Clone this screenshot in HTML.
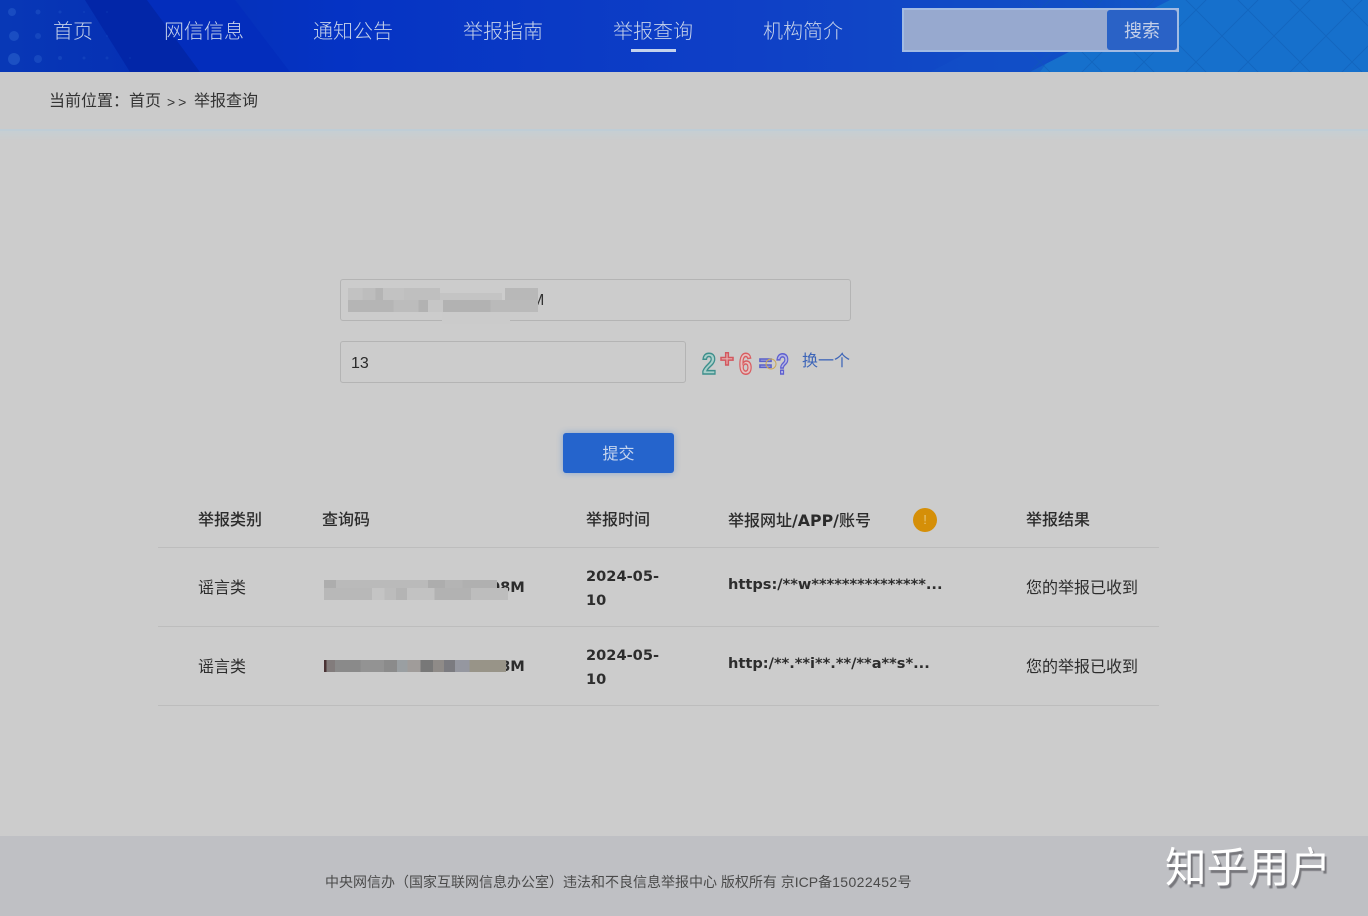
<!DOCTYPE html>
<html lang="zh">
<head>
<meta charset="utf-8">
<title>举报查询</title>
<style>
html,body{margin:0;padding:0;}
body{width:1368px;height:916px;position:relative;overflow:hidden;background:#cccccc;font-family:"Liberation Sans","Noto Sans CJK SC",sans-serif;color:#2a2a2a;}
.a{position:absolute;white-space:nowrap;}
.hd{position:absolute;left:0;top:0;width:1368px;height:72px;overflow:hidden;background:#0a3bc4;}
.hd svg{position:absolute;left:0;top:0;}
.nav{position:absolute;top:17px;font-size:20px;line-height:30px;color:#c6d2ea;width:80px;text-align:center;font-weight:300;}
.th{font-size:16px;line-height:24px;color:#2b2b2b;font-weight:500;}
.td{font-size:16px;line-height:24px;color:#2d2d2d;}
.b{font-family:"DejaVu Sans","Noto Sans CJK SC",sans-serif;font-weight:bold;font-size:14.6px;}
.ln{position:absolute;left:158px;width:1001px;height:1px;background:#bdbdbd;}
</style>
</head>
<body>
<div class="hd">
<svg width="1368" height="72" viewBox="0 0 1368 72">
<defs>
<linearGradient id="g" x1="0" x2="1" y1="0" y2="0">
<stop offset="0" stop-color="#0838b6"/><stop offset=".1" stop-color="#0530b4"/><stop offset=".25" stop-color="#0533c4"/><stop offset=".55" stop-color="#0f40c6"/><stop offset=".8" stop-color="#1150c6"/><stop offset="1" stop-color="#1773cc"/>
</linearGradient>
<pattern id="d" width="52" height="52" patternUnits="userSpaceOnUse" patternTransform="translate(1170 -16)">
<path d="M0 0L52 52M52 0L0 52" stroke="#0f5ab0" stroke-width="1" fill="none"/>
</pattern>
</defs>
<rect width="1368" height="72" fill="url(#g)"/>
<polygon points="85,0 147,0 200,72 130,72" fill="#0226a8"/>
<polygon points="147,0 235,0 290,72 200,72" fill="#032dbc"/>
<polygon points="1030,72 1170,0 1368,0 1368,72" fill="#1670cc"/>
<polygon points="930,72 1010,30 1070,30 1040,72" fill="#1150c8" opacity=".5"/>
<rect x="1030" width="338" height="72" fill="url(#d)" opacity=".45"/>
<g fill="#2a60cc">
<circle cx="12" cy="12" r="4" opacity=".5"/><circle cx="38" cy="12" r="2.5" opacity=".4"/><circle cx="60" cy="12" r="1.5" opacity=".3"/><circle cx="84" cy="12" r="1" opacity=".25"/><circle cx="107" cy="12" r="1" opacity=".2"/>
<circle cx="14" cy="36" r="5" opacity=".55"/><circle cx="38" cy="36" r="3" opacity=".4"/><circle cx="60" cy="36" r="1.5" opacity=".3"/><circle cx="107" cy="36" r="1" opacity=".2"/>
<circle cx="14" cy="59" r="6" opacity=".6"/><circle cx="38" cy="59" r="4" opacity=".45"/><circle cx="60" cy="58" r="2" opacity=".35"/><circle cx="84" cy="58" r="1.5" opacity=".3"/><circle cx="107" cy="58" r="1.5" opacity=".25"/><circle cx="130" cy="58" r="1" opacity=".2"/>
</g>
</svg>
<div class="nav" style="left:33px">首页</div>
<div class="nav" style="left:164px">网信信息</div>
<div class="nav" style="left:313px">通知公告</div>
<div class="nav" style="left:463px">举报指南</div>
<div class="nav" style="left:613px">举报查询</div>
<div class="nav" style="left:763px">机构简介</div>
<div class="a" style="left:631px;top:49px;width:45px;height:3px;background:#c4d2ec;"></div>
<div class="a" style="left:902px;top:8px;width:273px;height:40px;border:2px solid #a2bbe3;background:#97a9cf;"></div>
<div class="a" style="left:1107px;top:10px;width:70px;height:40px;background:#2a62c6;border-radius:3px;color:#c3cfe8;font-size:18px;line-height:42px;text-align:center;">搜索</div>
</div>

<div class="a" style="left:0;top:72px;width:1368px;height:57px;background:#cbcbcb;"></div>
<div class="a" style="left:0;top:129px;width:1368px;height:2px;background:#bfcdd6;"></div>
<div class="a" style="left:0;top:131px;width:1368px;height:10px;background:linear-gradient(#c6cfd3,#cccccc);"></div>
<div class="a" style="left:49px;top:90px;font-size:16px;line-height:24px;color:#333;">当前位置：首页</div>
<div class="a" style="left:167px;top:90px;font-size:14px;line-height:24px;color:#333;letter-spacing:3px;">&gt;&gt;</div>
<div class="a" style="left:194px;top:90px;font-size:16px;line-height:24px;color:#333;">举报查询</div>

<!-- query code input -->
<div class="a" style="left:340px;top:279px;width:509px;height:40px;border:1px solid #b4b4b4;border-radius:3px;"></div>
<div class="a" style="left:531px;top:290px;font-size:16px;line-height:22px;color:#333;">M</div>
<div class="a" style="left:348px;top:288px;width:92px;height:12px;background:linear-gradient(90deg,#c2c2c2 0 16%,#bdbdbd 16% 30%,#b4b4b4 30% 38%,#c2c2c2 38% 61%,#bfbfbf 61% 100%);"></div>
<div class="a" style="left:348px;top:300px;width:190px;height:12px;background:linear-gradient(90deg,#b5b5b5 0 24%,#bcbcbc 24% 37%,#b2b2b2 37% 42%,#c6c6c6 42% 50%,#b2b2b2 50% 75%,#bababa 75% 100%);"></div>
<div class="a" style="left:440px;top:293px;width:62px;height:7px;background:#c4c4c4;"></div>
<div class="a" style="left:442px;top:312px;width:68px;height:12px;background:#cbcbcb;"></div>
<div class="a" style="left:505px;top:288px;width:33px;height:12px;background:#b8b8b8;"></div>

<!-- captcha -->
<div class="a" style="left:340px;top:341px;width:344px;height:40px;border:1px solid #b4b4b4;border-radius:3px;"></div>
<div class="a" style="left:351px;top:352px;font-size:16px;line-height:24px;color:#2a2a2a;">13</div>
<svg class="a" style="left:695px;top:345px;" width="100" height="35" viewBox="0 0 100 35">
<g font-family="Liberation Sans,sans-serif" font-weight="bold" stroke-width="1.5">
<text x="7" y="29" font-size="30" stroke="#3d8f8c" fill="#a9cfc9" textLength="14" lengthAdjust="spacingAndGlyphs">2</text>
<text x="25" y="22" font-size="24" stroke="#d2585f" fill="#e6b4b4" textLength="14" lengthAdjust="spacingAndGlyphs">+</text>
<text x="44" y="29" font-size="30" stroke="#d95c60" fill="#e6c0c0" textLength="13" lengthAdjust="spacingAndGlyphs">6</text>
<text x="64" y="26" font-size="22" stroke="#5a61c9" fill="#a9acdf" textLength="13" lengthAdjust="spacingAndGlyphs">=</text>
<text x="81" y="29" font-size="29" stroke="#5e5fd0" fill="#b4b4e4" textLength="13" lengthAdjust="spacingAndGlyphs">?</text>
</g>
<circle cx="76" cy="19" r="5" fill="none" stroke="#c9a85a" stroke-width="1"/>
</svg>
<div class="a" style="left:802px;top:350px;font-size:16px;line-height:24px;color:#3d65b8;">换一个</div>

<div class="a" style="left:563px;top:433px;width:111px;height:40px;background:#2564cc;border-radius:3px;box-shadow:0 0 7px rgba(50,120,220,.45);color:#c6d5ee;font-size:16px;line-height:44px;text-align:center;">提交</div>

<!-- table -->
<div class="a th" style="left:198px;top:509px;">举报类别</div>
<div class="a th" style="left:322px;top:509px;">查询码</div>
<div class="a th" style="left:586px;top:509px;">举报时间</div>
<div class="a th" style="left:728px;top:509px;">举报网址<span style="font-family:'DejaVu Sans',sans-serif;font-weight:bold;font-size:15.8px;">/APP/</span>账号</div>
<div class="a" style="left:913px;top:508px;width:24px;height:24px;border-radius:50%;background:#d58f08;color:#e9c678;font-size:13px;line-height:24px;text-align:center;">!</div>
<div class="a th" style="left:1026px;top:509px;">举报结果</div>
<div class="ln" style="top:547px;"></div>

<div class="a td" style="left:198px;top:577px;">谣言类</div>
<div class="a td b" style="left:490px;top:576px;">08M</div>
<div class="a" style="left:324px;top:580px;width:173px;height:8px;background:linear-gradient(90deg,#adadad 0 7%,#bababa 7% 60%,#adadad 60% 70%,#b4b4b4 70% 80%,#b0b0b0 80% 100%);"></div>
<div class="a" style="left:324px;top:588px;width:184px;height:12px;background:linear-gradient(90deg,#b8b8b8 0 26%,#c4c4c4 26% 33%,#bcbcbc 33% 39%,#b4b4b4 39% 45%,#c2c2c2 45% 60%,#b2b2b2 60% 80%,#bdbdbd 80% 100%);"></div>
<div class="a td b" style="left:586px;top:565px;line-height:24px;">2024-05-<br>10</div>
<div class="a td b" style="left:728px;top:573px;">https:/**w***************...</div>
<div class="a td" style="left:1026px;top:577px;">您的举报已收到</div>
<div class="ln" style="top:626px;"></div>

<div class="a td" style="left:198px;top:656px;">谣言类</div>
<div class="a td b" style="left:490px;top:655px;">08M</div>
<div class="a" style="left:324px;top:660px;width:182px;height:12px;background:linear-gradient(90deg,#4a3335 0 1.5%,#827c7c 1.5% 6%,#8a8a8a 6% 20%,#939393 20% 33%,#8b8b8b 33% 40%,#9a9fa2 40% 46%,#a09c9a 46% 53%,#787878 53% 60%,#8f8b88 60% 66%,#7b7b80 66% 72%,#9597a0 72% 80%,#989488 80% 100%);"></div>
<div class="a td b" style="left:586px;top:644px;line-height:24px;">2024-05-<br>10</div>
<div class="a td b" style="left:728px;top:652px;">http:/**.**i**.**/**a**s*...</div>
<div class="a td" style="left:1026px;top:656px;">您的举报已收到</div>
<div class="ln" style="top:705px;"></div>

<!-- footer -->
<div class="a" style="left:0;top:836px;width:1368px;height:80px;background:#bfc0c4;"></div>
<div class="a" style="left:325px;top:871px;font-size:14px;line-height:22px;color:#4a4a4a;">中央网信办（国家互联网信息办公室）违法和不良信息举报中心 版权所有 京ICP备<span style="letter-spacing:.4px;">15022452</span>号</div>
<div class="a" style="left:1165px;top:844px;font-size:41.5px;line-height:48px;color:#fff;text-shadow:2px 3px 1px #77777c;">知乎用户</div>
</body>
</html>
